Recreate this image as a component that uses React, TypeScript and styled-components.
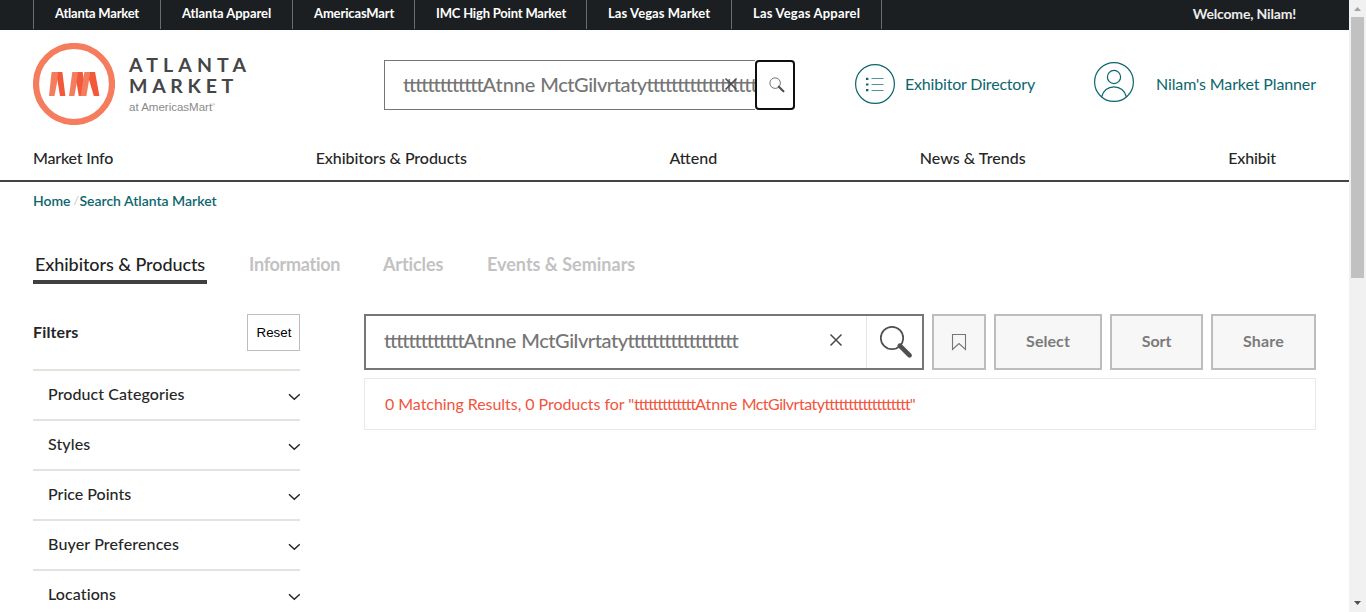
import React from 'react';
import styled, { createGlobalStyle } from 'styled-components';

const teal = '#0b666d';

const GlobalStyle = createGlobalStyle`
  *, *::before, *::after { box-sizing: border-box; }
  body { margin: 0; background: #fff; overflow: hidden; font-family: Lato, "Liberation Sans", sans-serif; color: #262626; }
  svg { display: block; flex: none; }
  button { font-family: inherit; margin: 0; }
  a { color: inherit; text-decoration: none; }
`;

const Viewport = styled.div`
  display: grid;
  grid-template-columns: 1fr 17px;
  height: 612px;
  overflow: hidden;
`;

const Page = styled.div`
  height: 612px;
  overflow: hidden;
`;

const Run = styled.span<{ $ls?: number }>`
  letter-spacing: ${p => p.$ls ?? 0}px;
  white-space: pre;
`;

/* Top bar */
const TopBar = styled.div`
  display: flex;
  justify-content: space-between;
  height: 30px;
  padding: 0 53px 0 33px;
  background: #1c1f22;
  color: #fff;
`;

const TopLinks = styled.nav`
  display: flex;
  height: 29px;
  border-right: 1px solid #6a6c6e;
`;

const TopLink = styled.a<{ $w: number }>`
  width: ${p => p.$w}px;
  padding-left: 21px;
  border-left: 1px solid #6a6c6e;
  font-size: 13px;
  font-weight: 700;
  line-height: 27px;
`;

const Welcome = styled.div`
  font-size: 14px;
  font-weight: 700;
  line-height: 28px;
  color: #ececec;
`;

/* Header */
const Header = styled.header`
  display: flex;
  align-items: flex-start;
  height: 106px;
  padding: 0 33px;
`;

const Brand = styled.a`
  display: flex;
  width: 351px;
  padding-top: 13px;
`;

const BrandText = styled.div`
  display: flex;
  flex-direction: column;
  padding: 11px 0 0 14px;
`;

const BrandName = styled.span<{ $ls: number }>`
  height: 21px;
  font-size: 19.5px;
  font-weight: 700;
  line-height: 21px;
  letter-spacing: ${p => p.$ls}px;
  color: #454648;
`;

const BrandSub = styled.span`
  margin-top: 3px;
  font-family: "Liberation Sans", sans-serif;
  font-size: 11.5px;
  line-height: 16px;
  letter-spacing: 0;
  color: #8a8a8a;
`;

const Registered = styled.sup`
  font-size: 4px;
  line-height: 0;
  vertical-align: 5px;
`;

const HeaderSearch = styled.form`
  display: flex;
  width: 411px;
  height: 50px;
  margin-top: 30px;
`;

const HeaderField = styled.div`
  position: relative;
  width: 371px;
  border: 1px solid #767676;
  border-right: 0;
  padding-left: 18px;
  overflow: hidden;
  font-size: 20px;
  font-weight: 500;
  line-height: 46px;
  white-space: nowrap;
  color: #757575;
`;

const ClearOverlay = styled.span`
  position: absolute;
  right: 17px;
  top: 16px;
`;

const HeaderSearchButton = styled.button`
  display: flex;
  align-items: flex-start;
  justify-content: flex-start;
  width: 40px;
  padding: 15px 0 0 12px;
  border: 2px solid #101010;
  border-radius: 4px;
  background: #fff;
`;

const HeaderLink = styled.a<{ $indent: number; $top: number; $gap: number }>`
  display: flex;
  align-items: flex-start;
  gap: ${p => p.$gap}px;
  margin-left: ${p => p.$indent}px;
  padding-top: ${p => p.$top}px;
  color: ${teal};
`;

const HeaderLinkText = styled.span<{ $drop: number }>`
  margin-top: ${p => p.$drop}px;
  font-size: 16px;
  line-height: 20px;
  white-space: nowrap;
`;

const MainNav = styled.nav`
  display: flex;
  justify-content: space-between;
  height: 46px;
  padding: 0 73px 0 33px;
  border-bottom: 2px solid #434445;
  font-size: 16px;
  font-weight: 500;
  line-height: 43px;
`;

const Breadcrumb = styled.div`
  display: flex;
  gap: 3px;
  height: 38px;
  padding-left: 33px;
  font-size: 14px;
  font-weight: 600;
  line-height: 38px;
  color: ${teal};
`;

const Slash = styled.span`
  width: 3px;
  font-size: 12px;
  font-weight: 400;
  color: #c4c4c4;
`;

/* Result tabs */
const Tabs = styled.div`
  display: flex;
  gap: 40px;
  padding: 27px 33px 0;
`;

const Tab = styled.a<{ $w: number; $active?: boolean }>`
  width: ${p => p.$w}px;
  height: 37px;
  padding-left: 2px;
  border-bottom: 4px solid ${p => (p.$active ? '#404040' : 'transparent')};
  font-size: 18px;
  font-weight: ${p => (p.$active ? 500 : 700)};
  line-height: 34px;
  white-space: nowrap;
  color: ${p => (p.$active ? '#222' : '#c2c2c2')};
`;

/* Body */
const Columns = styled.div`
  display: grid;
  grid-template-columns: 267px 952px;
  column-gap: 64px;
  padding: 30px 33px 0;
`;

const FilterHead = styled.div`
  display: flex;
  justify-content: space-between;
  height: 37px;
  margin-bottom: 18px;
  font-size: 16px;
  font-weight: 700;
  line-height: 36px;
`;

const ResetButton = styled.button`
  width: 53px;
  height: 37px;
  padding: 0 0 0 1px;
  border: 1px solid #bdbdbd;
  background: #fff;
  font-family: "Liberation Sans", sans-serif;
  font-size: 13.33px;
  color: #000;
`;

const FilterRow = styled.div`
  display: flex;
  justify-content: space-between;
  height: 50px;
  padding-left: 15px;
  border-top: 2px solid #e3e3dd;
  font-size: 16px;
  font-weight: 500;
  line-height: 45px;
`;

const Chevron = styled.svg`
  margin-top: 22px;
`;

const Toolbar = styled.div`
  display: flex;
  gap: 8px;
  height: 56px;
`;

const SearchBox = styled.div`
  display: flex;
  width: 560px;
  border: 2px solid #767676;
  background: #fff;
`;

const SearchValue = styled.div`
  flex: 1;
  padding-left: 18px;
  font-size: 20px;
  font-weight: 500;
  line-height: 49px;
  white-space: nowrap;
  color: #757575;
`;

const ClearButton = styled.span`
  width: 37px;
  padding-top: 17px;
`;

const SearchButton = styled.span`
  width: 56px;
  padding: 9px 0 0 12px;
  border-left: 1px solid #e6e6e6;
`;

const ToolButton = styled.button<{ $w: number }>`
  display: flex;
  align-items: center;
  justify-content: center;
  width: ${p => p.$w}px;
  padding: 0;
  border: 2px solid #bdbdbd;
  background: #f7f7f7;
  font-size: 16px;
  font-weight: 700;
  line-height: 20px;
  color: #7b7b7b;
`;

const ToolLabel = styled(Run)`
  padding-bottom: 3px;
`;

const ResultBar = styled.div`
  height: 52px;
  margin-top: 8px;
  padding-left: 20px;
  border: 1px solid #e8e8e8;
  font-size: 16px;
  line-height: 49px;
  white-space: nowrap;
  color: #f2543d;
`;

/* Scrollbar */
const ScrollTrack = styled.div`
  display: flex;
  flex-direction: column;
  align-items: center;
  justify-content: space-between;
  height: 612px;
  background: #f1f1f1;
`;

const ScrollTop = styled.div`
  width: 13px;
`;

const ScrollThumb = styled.div`
  height: 261px;
  background: #c1c1c1;
`;

const LogoMark = () => (
  <svg width="82" height="82" viewBox="0 0 82 82">
    <circle cx="41" cy="41" r="38" fill="none" stroke="#f57c5d" strokeWidth="6.2" />
    <path d="M18.6 29H26L21.5 53H16z" fill="#f57c5d" />
    <path d="M25 29h4.4L32.4 53H27L24.2 36z" fill="#f2593a" />
    <path d="M39.3 29h6.5L41.4 53H36z" fill="#f57c5d" />
    <path d="M45 29h4.6L51.6 41 50.4 53H45.8L43.4 39z" fill="#f2593a" />
    <path d="M51.4 29h6L53.4 53H47.6z" fill="#f57c5d" />
    <path d="M57 29h5.1L66.4 53H60.8L55.8 36z" fill="#f2593a" />
  </svg>
);

const Magnifier = ({ size }: { size: number }) => (
  <svg width={size} height={size} viewBox="0 0 34 34">
    <circle cx="13" cy="13" r="11.2" fill="none" stroke="#505050" strokeWidth="1.7" />
    <path d="M20.8 20.6L30.6 30.4" stroke="#505050" strokeWidth="4.6" strokeLinecap="round" />
  </svg>
);

const Cross = () => (
  <svg width="14" height="14" viewBox="0 0 14 14">
    <path d="M1.500 1.500L12.500 12.500M12.500 1.500L1.500 12.500" stroke="#4a4a4a" strokeWidth="1.5" />
  </svg>
);

const DirectoryIcon = () => (
  <svg width="40" height="40" viewBox="0 0 40 40" fill="none" stroke={teal}>
    <circle cx="20" cy="20" r="19.4" strokeWidth="1.2" />
    <path d="M11 14.9h2.4M11 20.5h2.4M11 26.1h2.4" strokeWidth="2.2" />
    <path d="M16.500 14.500h12M16.500 20.500h12M16.500 26.500h12" strokeOpacity=".7" />
  </svg>
);

const PersonIcon = () => (
  <svg width="40" height="40" viewBox="0 0 40 40" fill="none" stroke={teal} strokeWidth="1.2">
    <circle cx="20" cy="20" r="19.4" />
    <circle cx="20" cy="15" r="6.6" />
    <path d="M7.500 35C9 28.600 14 24.800 20 24.800S31 28.600 32.500 35" />
  </svg>
);

const topLinks: [string, number, number][] = [
  ['Atlanta Market', 127, -0.22],
  ['Atlanta Apparel', 132, -0.05],
  ['AmericasMart', 122, -0.14],
  ['IMC High Point Market', 172, -0.19],
  ['Las Vegas Market', 145, 0.08],
  ['Las Vegas Apparel', 150, 0.2],
];

const navItems: [string, number][] = [
  ['Market Info', -0.2],
  ['Exhibitors & Products', -0.07],
  ['Attend', 0],
  ['News & Trends', 0.03],
  ['Exhibit', -0.16],
];

const filters: [string, number][] = [
  ['Product Categories', 0.09],
  ['Styles', 0.1],
  ['Price Points', 0],
  ['Buyer Preferences', 0.15],
  ['Locations', 0.1],
];

const QueryText = () => (
  <>
    <Run $ls={-1.12}>{'t'.repeat(13)}</Run>
    <Run $ls={-0.1}>{'Atnne '}</Run>
    <Run $ls={-0.45}>MctGilvrtaty</Run>
    <Run $ls={-1.13}>{'t'.repeat(18)}</Run>
  </>
);

export default function App() {
  return (
    <Viewport>
      <GlobalStyle />
      <Page>
        <TopBar>
          <TopLinks>
            {topLinks.map(([label, w, ls]) => (
              <TopLink key={label} $w={w} href="#"><Run $ls={ls}>{label}</Run></TopLink>
            ))}
          </TopLinks>
          <Welcome><Run $ls={-0.17}>Welcome, Nilam!</Run></Welcome>
        </TopBar>

        <Header>
          <Brand href="#">
            <LogoMark />
            <BrandText>
              <BrandName $ls={5.1}>ATLANTA</BrandName>
              <BrandName $ls={4.7}>MARKET</BrandName>
              <BrandSub>at AmericasMart<Registered>®</Registered></BrandSub>
            </BrandText>
          </Brand>
          <HeaderSearch>
            <HeaderField>
              <QueryText />
              <ClearOverlay><Cross /></ClearOverlay>
            </HeaderField>
            <HeaderSearchButton type="button"><Magnifier size={16} /></HeaderSearchButton>
          </HeaderSearch>
          <HeaderLink href="#" $indent={60} $top={34} $gap={10}>
            <DirectoryIcon />
            <HeaderLinkText $drop={10}><Run $ls={-0.18}>Exhibitor Directory</Run></HeaderLinkText>
          </HeaderLink>
          <HeaderLink href="#" $indent={59} $top={32} $gap={22}>
            <PersonIcon />
            <HeaderLinkText $drop={12}><Run $ls={-0.12}>Nilam's Market Planner</Run></HeaderLinkText>
          </HeaderLink>
        </Header>

        <MainNav>
          {navItems.map(([label, ls]) => <Run as="a" key={label} $ls={ls}>{label}</Run>)}
        </MainNav>

        <Breadcrumb>
          <Run $ls={-0.05}>Home</Run>
          <Slash>/</Slash>
          <Run $ls={0}>Search Atlanta Market</Run>
        </Breadcrumb>

        <Tabs>
          <Tab $w={174} $active><Run $ls={-0.08}>Exhibitors &amp; Products</Run></Tab>
          <Tab $w={94}><Run $ls={-0.28}>Information</Run></Tab>
          <Tab $w={64}><Run $ls={-0.12}>Articles</Run></Tab>
          <Tab $w={152}><Run $ls={0}>Events &amp; Seminars</Run></Tab>
        </Tabs>

        <Columns>
          <aside>
            <FilterHead>
              <Run $ls={0.15}>Filters</Run>
              <ResetButton>Reset</ResetButton>
            </FilterHead>
            {filters.map(([label, ls]) => (
              <FilterRow key={label}>
                <Run $ls={ls}>{label}</Run>
                <Chevron width="12" height="8" viewBox="0 0 12 8">
                  <path d="M1 1.200L6.300 6.300L11.800 1.200" fill="none" stroke="#262626" strokeWidth="1.5" />
                </Chevron>
              </FilterRow>
            ))}
          </aside>
          <main>
            <Toolbar>
              <SearchBox>
                <SearchValue><QueryText /></SearchValue>
                <ClearButton><Cross /></ClearButton>
                <SearchButton><Magnifier size={34} /></SearchButton>
              </SearchBox>
              <ToolButton $w={54}>
                <svg width="16" height="18" viewBox="0 0 16 18">
                  <path d="M1.500 1.500h13v15L8 10.600L1.500 16.500z" fill="none" stroke="#757575" strokeWidth="1.1" />
                </svg>
              </ToolButton>
              <ToolButton $w={108}><ToolLabel $ls={0.05}>Select</ToolLabel></ToolButton>
              <ToolButton $w={93}><ToolLabel $ls={-0.1}>Sort</ToolLabel></ToolButton>
              <ToolButton $w={105}><ToolLabel $ls={0.2}>Share</ToolLabel></ToolButton>
            </Toolbar>
            <ResultBar>
              <Run $ls={-0.05}>{'0 Matching Results, 0 Products for "'}</Run>
              <Run $ls={-1.04}>{'t'.repeat(13)}</Run>
              <Run>{'Atnne '}</Run>
              <Run $ls={-0.5}>MctGilvrtaty</Run>
              <Run $ls={-1}>{'t'.repeat(18)}</Run>
              <Run>"</Run>
            </ResultBar>
          </main>
        </Columns>
      </Page>

      <ScrollTrack>
        <ScrollTop>
          <svg width="13" height="17" viewBox="0 0 13 17">
            <path d="M3 11h7L6.500 7z" fill="#a3a3a3" />
          </svg>
          <ScrollThumb />
        </ScrollTop>
        <svg width="13" height="17" viewBox="0 0 13 17">
          <path d="M3 6h7L6.500 10z" fill="#505050" />
        </svg>
      </ScrollTrack>
    </Viewport>
  );
}
